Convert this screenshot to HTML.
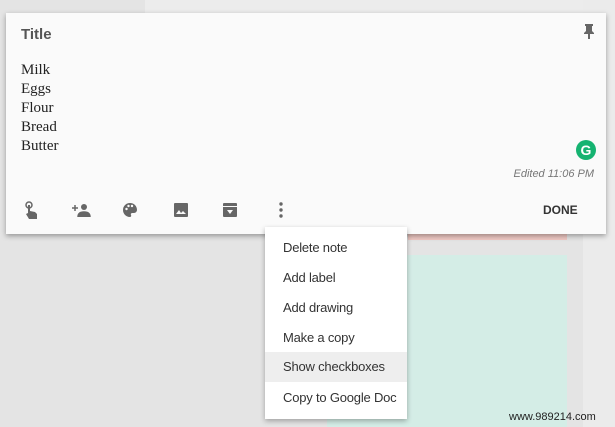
<!DOCTYPE html>
<html><head><style>
body{margin:0;width:615px;height:427px;background:#e4e4e4;position:relative;overflow:hidden;font-family:"Liberation Sans",sans-serif}
.abs{position:absolute}
.card{left:6px;top:13px;width:600px;height:221px;background:#fafafa;box-shadow:0 2px 5px rgba(0,0,0,.35)}
.menu{left:265px;top:227px;width:142px;height:192px;background:#fff;box-shadow:0 2px 5px rgba(0,0,0,.3)}
.mi{position:absolute;left:0;width:142px;height:30px;line-height:30px;padding-left:18px;box-sizing:border-box;font-size:13px;color:#333;letter-spacing:-0.2px}
.body{font-family:"Liberation Serif",serif;font-size:15px;color:#222;line-height:19px}
</style></head><body>
<div class="abs" style="left:145px;top:0;width:470px;height:14px;background:#ececec"></div>
<div class="abs" style="left:583px;top:0;width:32px;height:427px;background:#ebebeb"></div>
<div class="abs" style="left:408px;top:226px;width:159px;height:14px;background:#efc9c3"></div>
<div class="abs" style="left:327px;top:255px;width:240px;height:172px;background:#d4ede6"></div>
<div class="abs card">
 <div class="abs" style="left:15px;top:13px;font-size:15px;font-weight:bold;color:#555">Title</div>
 <svg class="abs" style="left:577px;top:10px" width="12" height="16" viewBox="0 0 12 16"><path d="M2 1h8v2H9v5l2 2v1H7v5H5v-5H1v-1l2-2V3H2z" fill="#666"/></svg>
 <div class="abs body" style="left:15px;top:48px">Milk<br>Eggs<br>Flour<br>Bread<br>Butter</div>
 <div class="abs" style="left:570px;top:127px;width:20px;height:20px;border-radius:50%;background:#15b371;color:#fff;font-weight:bold;font-size:14px;text-align:center;line-height:20px">G</div>
 <div class="abs" style="right:12px;top:155px;font-size:11px;font-style:italic;color:#777">Edited 11:06 PM</div>
 <svg class="abs" style="left:18px;top:188px" width="16" height="18" viewBox="0 0 16 18"><circle cx="5" cy="4" r="3" fill="none" stroke="#666" stroke-width="1.5"/><path d="M4 4h2v6l5 1 2 2v5H5l-3-5 2-1z" fill="#666"/></svg>
 <svg class="abs" style="left:65px;top:190px" width="20" height="14" viewBox="0 0 20 14"><circle cx="13" cy="4" r="3" fill="#666"/><path d="M7 14c0-4 3-5 6-5s6 1 6 5z M1 5h6 M4 2v6" fill="#666" stroke="#666" stroke-width="1.5"/></svg>
 <svg class="abs" style="left:116px;top:189px" width="16" height="16" viewBox="0 0 16 16"><path d="M8 1a7 7 0 0 0 0 14c1 0 1.5-1 1-2s0-2 1.5-2H12a3 3 0 0 0 3-3c0-4-3-7-7-7z" fill="#666"/><circle cx="4.5" cy="7" r="1.2" fill="#fafafa"/><circle cx="6.5" cy="4" r="1.2" fill="#fafafa"/><circle cx="10" cy="4" r="1.2" fill="#fafafa"/></svg>
 <svg class="abs" style="left:168px;top:190px" width="14" height="14" viewBox="0 0 14 14"><rect width="14" height="14" rx="1" fill="#666"/><path d="M2 11l3-4 2 3 2-2 3 3z" fill="#fafafa"/></svg>
 <svg class="abs" style="left:217px;top:190px" width="14" height="14" viewBox="0 0 14 14"><rect width="14" height="14" rx="1" fill="#666"/><rect x="0" y="3" width="14" height="1" fill="#fafafa"/><path d="M4 7h6l-3 4z" fill="#fafafa"/></svg>
 <svg class="abs" style="left:273px;top:189px" width="4" height="16" viewBox="0 0 4 16"><circle cx="2" cy="2" r="1.7" fill="#666"/><circle cx="2" cy="8" r="1.7" fill="#666"/><circle cx="2" cy="14" r="1.7" fill="#666"/></svg>
 <div class="abs" style="left:537px;top:190px;font-size:12px;font-weight:bold;color:#333">DONE</div>
</div>
<div class="abs menu">
 <div class="mi" style="top:6px">Delete note</div>
 <div class="mi" style="top:36px">Add label</div>
 <div class="mi" style="top:66px">Add drawing</div>
 <div class="mi" style="top:96px">Make a copy</div>
 <div class="mi" style="top:125px;background:#eee">Show checkboxes</div>
 <div class="mi" style="top:156px">Copy to Google Doc</div>
</div>
<div class="abs" style="left:509px;top:411px;font-size:11px;color:#222">www.989214.com</div>
</body></html>
